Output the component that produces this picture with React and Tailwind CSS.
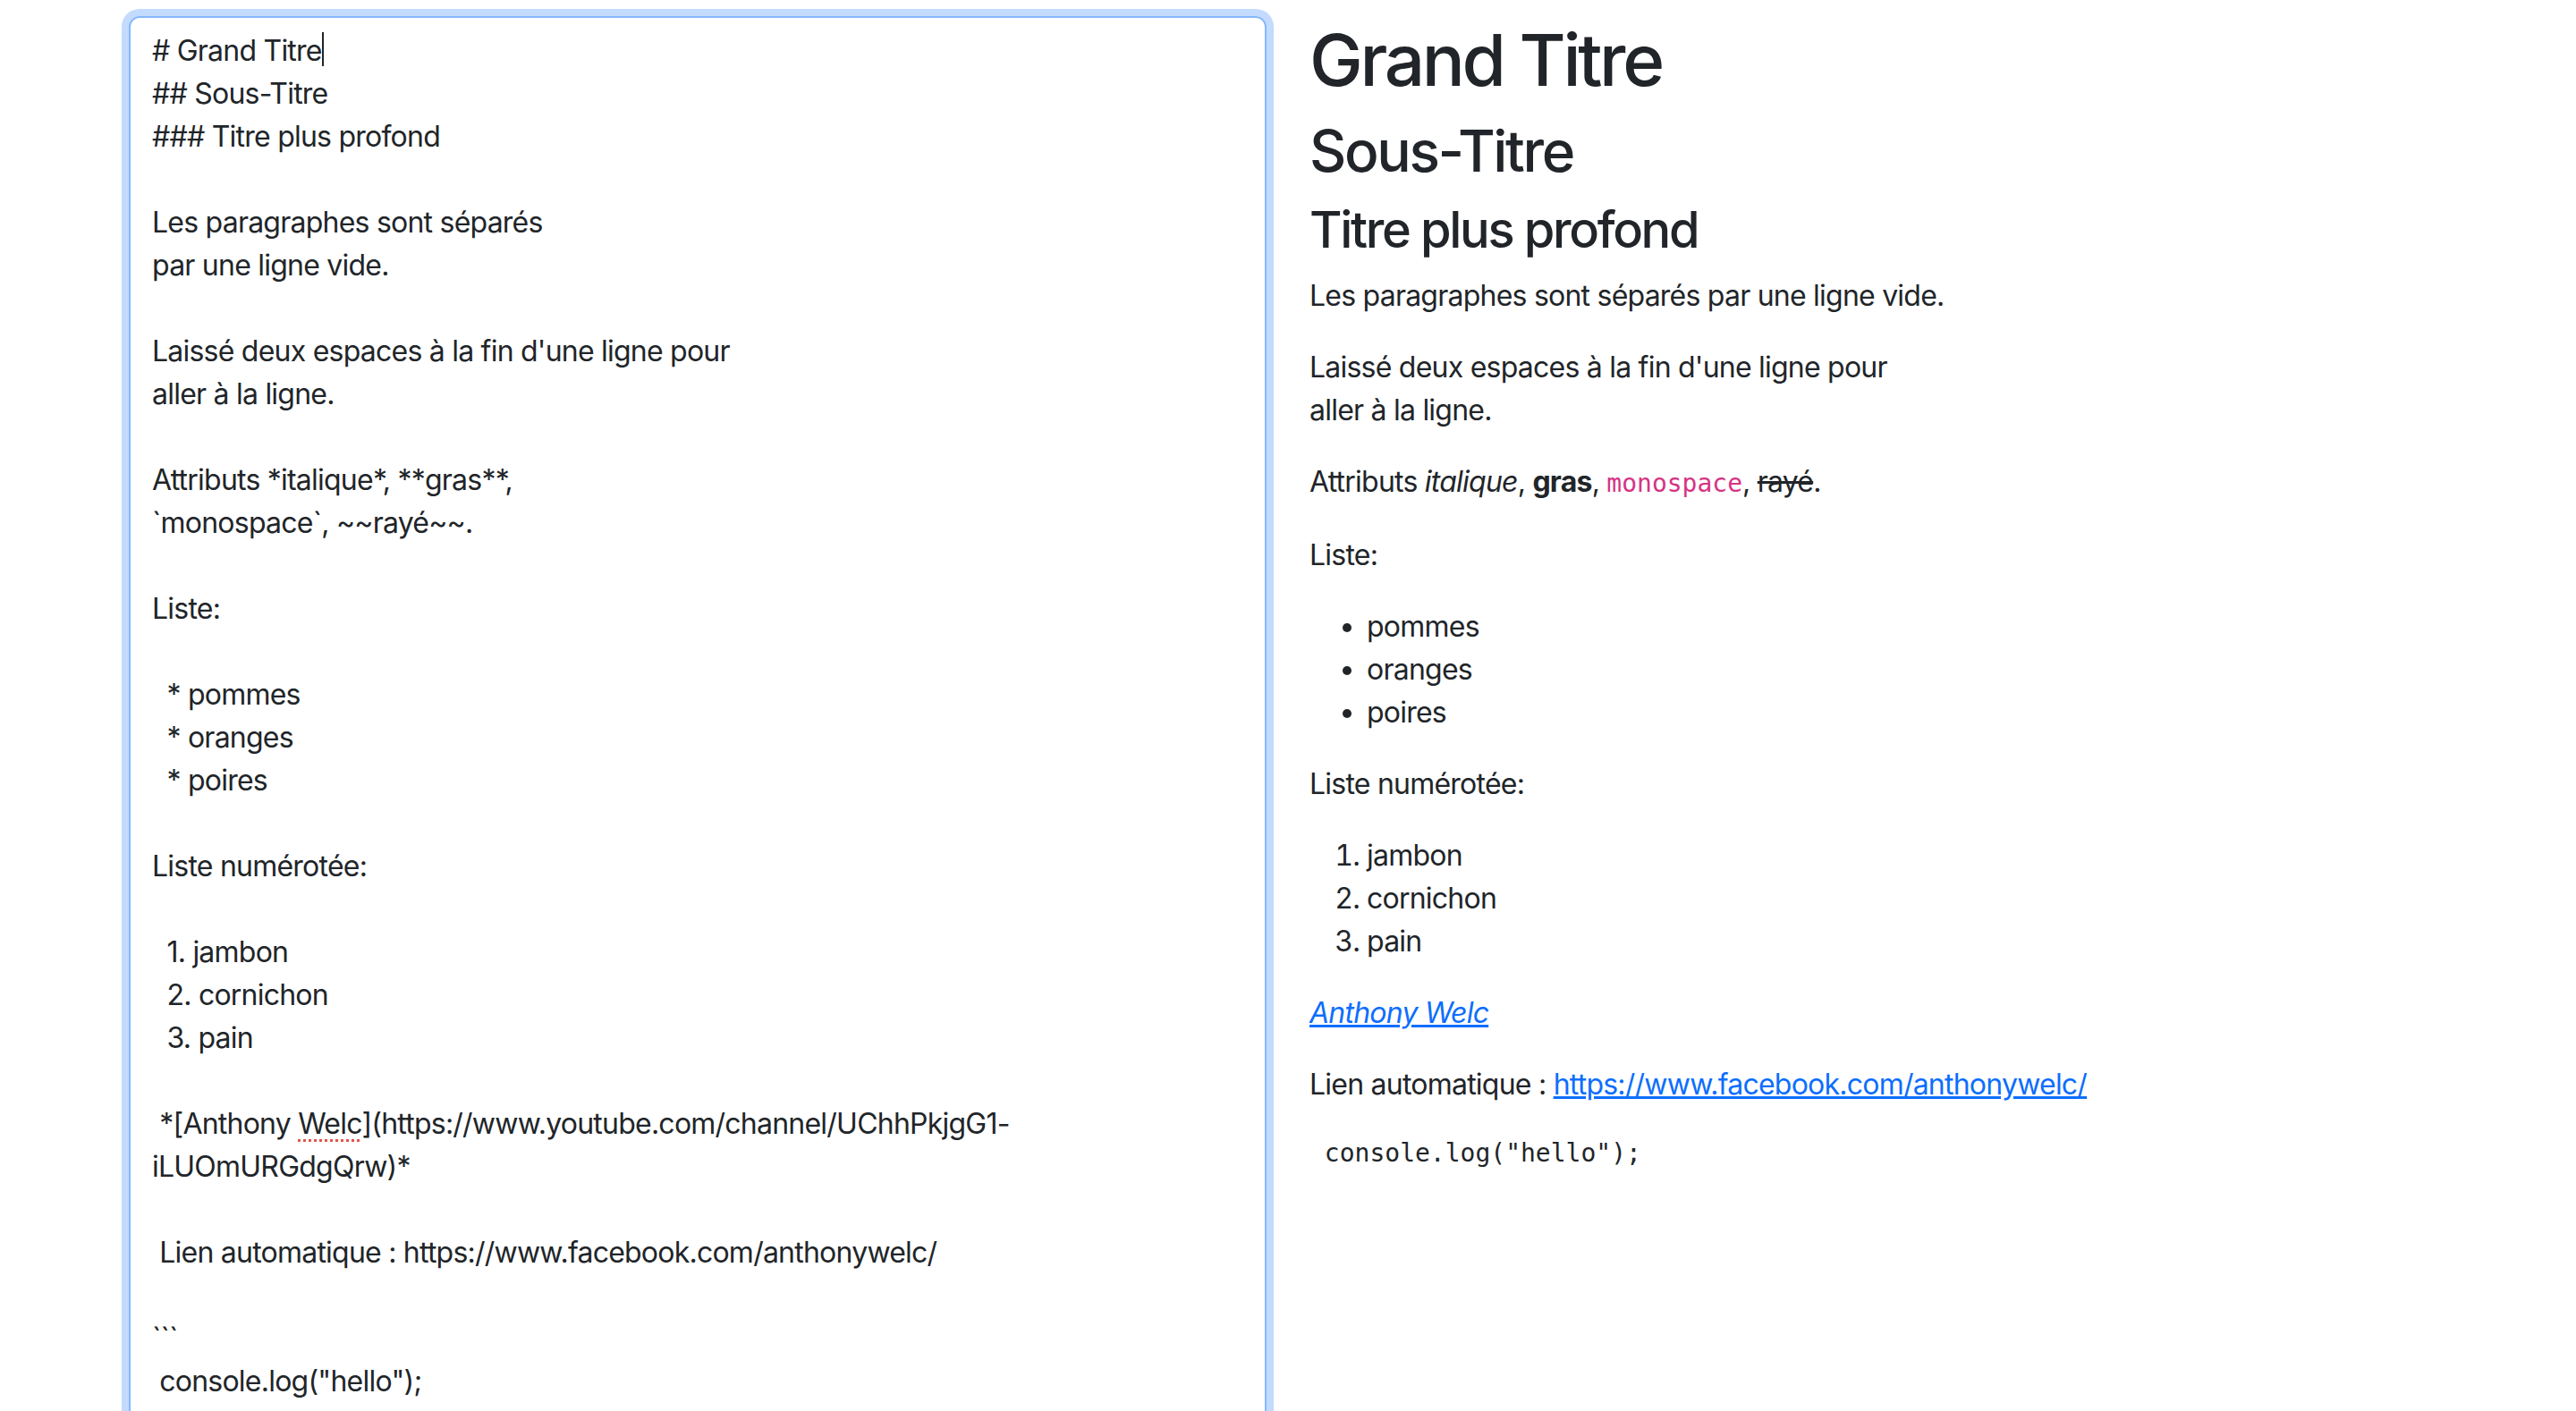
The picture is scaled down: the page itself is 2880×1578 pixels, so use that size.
function Line({ children }) {
  return (
    <div className="h-[48px] whitespace-pre">
      {children || "\u00a0"}
    </div>
  );
}

function App() {
  return (
    <div className="w-full h-[1578px] overflow-hidden bg-white text-[#212529] font-['Inter','Noto_Sans',sans-serif]">

      <div className="mx-auto w-[2640px] px-[24px] pt-[18px]">

        <div className="grid grid-cols-2 -mx-[24px]">

          {/* EDITOR */}
          <div className="px-[24px]">
            <div className="h-[1700px] border-2 border-[#86b7fe] rounded-[12px] shadow-[0_0_0_8px_rgba(13,110,253,0.25)] px-[24px] pt-[13px] pb-[12px] text-[32px] leading-[48px] tracking-[-0.77px]">
              <Line>
                # Grand Titre
                <span className="inline-block w-[2px] h-[38px] bg-[#212529] align-[-6px]"></span>
              </Line>
              <Line>## Sous-Titre</Line>
              <Line>### Titre plus profond</Line>
              <Line />
              <Line>Les paragraphes sont séparés</Line>
              <Line>par une ligne vide.</Line>
              <Line />
              <Line>Laissé deux espaces à la fin d'une ligne pour</Line>
              <Line>aller à la ligne.</Line>
              <Line />
              <Line>Attributs *italique*, **gras**,</Line>
              <Line>`monospace`, ~~rayé~~.</Line>
              <Line />
              <Line>Liste:</Line>
              <Line />
              <Line>{"  * pommes"}</Line>
              <Line>{"  * oranges"}</Line>
              <Line>{"  * poires"}</Line>
              <Line />
              <Line>Liste numérotée:</Line>
              <Line />
              <Line>{"  1. jambon"}</Line>
              <Line>{"  2. cornichon"}</Line>
              <Line>{"  3. pain"}</Line>
              <Line />
              <Line>
                {" *[Anthony "}
                <span className="underline decoration-dotted decoration-[#e5534b] decoration-[3px] underline-offset-[6px]">Welc</span>
                {"](https://www.youtube.com/channel/UChhPkjgG1-"}
              </Line>
              <Line>iLUOmURGdgQrw)*</Line>
              <Line />
              <Line>{" Lien automatique : https://www.facebook.com/anthonywelc/"}</Line>
              <Line />
              <Line>```</Line>
              <Line>{' console.log("hello");'}</Line>
            </div>
          </div>

          {/* PREVIEW */}
          <div className="px-[24px] pt-[1px] text-[32px] leading-[48px] tracking-[-0.77px]">

            <h1 className="text-[80px] font-medium leading-[1.2] tracking-[-0.042em] mb-[16px]">Grand Titre</h1>
            <h2 className="text-[64px] font-medium leading-[1.2] tracking-[-0.037em] mb-[16px]">Sous-Titre</h2>
            <h3 className="text-[56px] font-medium leading-[1.2] tracking-[-0.042em] mb-[16px]">Titre plus profond</h3>

            <p className="mb-[32px]">Les paragraphes sont séparés par une ligne vide.</p>

            <p className="mb-[32px]">
              Laissé deux espaces à la fin d'une ligne pour
              <br />
              aller à la ligne.
            </p>

            <p className="mb-[32px]">
              Attributs <em>italique</em>, <strong className="font-bold">gras</strong>,{" "}
              <code className="font-['DejaVu_Sans_Mono',monospace] text-[28px] tracking-normal text-[#d63384]">monospace</code>,{" "}
              <del>rayé</del>.
            </p>

            <p className="mb-[32px]">Liste:</p>

            <ul className="list-disc pl-[64px] mb-[32px]">
              <li>pommes</li>
              <li>oranges</li>
              <li>poires</li>
            </ul>

            <p className="mb-[32px]">Liste numérotée:</p>

            <ol className="list-decimal pl-[64px] mb-[32px]">
              <li>jambon</li>
              <li>cornichon</li>
              <li>pain</li>
            </ol>

            <p className="mb-[32px]">
              <em>
                <a href="#" className="text-[#0d6efd] underline">Anthony Welc</a>
              </em>
            </p>

            <p className="mb-[32px]">
              Lien automatique :{" "}
              <a href="#" className="text-[#0d6efd] underline">https://www.facebook.com/anthonywelc/</a>
            </p>

            <pre className="font-['DejaVu_Sans_Mono',monospace] text-[28px] leading-[42px] tracking-normal mb-[32px]">
              {' console.log("hello");'}
            </pre>

          </div>

        </div>

      </div>

    </div>
  );
}

export default App;
